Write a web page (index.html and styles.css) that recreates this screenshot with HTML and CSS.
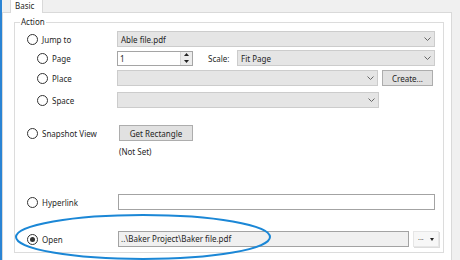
FILE: index.html
```html
<!DOCTYPE html>
<html>
<head>
    <title>Action</title>
    <link rel="stylesheet" href="styles.css">
</head>
<body>
    <div class="window">
        <div class="tabs">
            <div class="tab">Basic</div>
        </div>
        <div class="page">
            <fieldset class="group">
                <legend>Action</legend>

                <div class="row">
                    <div class="opt"><span class="radio"></span>Jump to</div>
                    <div class="combo jump-combo"><span>Able file.pdf</span><svg width="7" height="4"><path d="M0.5 0.5L3.5 3.5L6.5 0.5" fill="none" stroke="#666"/></svg></div>
                </div>

                <div class="row r-page">
                    <div class="opt sub"><span class="radio"></span>Page</div>
                    <div class="spinner">
                        <span class="spin-value">1</span>
                        <div class="spin">
                            <svg width="5" height="3"><path d="M0 3L2.5 0L5 3Z" fill="#222"/></svg>
                            <svg width="5" height="3"><path d="M0 0L2.5 3L5 0Z" fill="#222"/></svg>
                        </div>
                    </div>
                    <span class="scale-label">Scale:</span>
                    <div class="combo fill"><span>Fit Page</span><svg width="7" height="4"><path d="M0.5 0.5L3.5 3.5L6.5 0.5" fill="none" stroke="#666"/></svg></div>
                </div>

                <div class="row r-place">
                    <div class="opt sub"><span class="radio"></span>Place</div>
                    <div class="combo place-combo"><span></span><svg width="7" height="4"><path d="M0.5 0.5L3.5 3.5L6.5 0.5" fill="none" stroke="#666"/></svg></div>
                    <button class="btn create-btn">Create...</button>
                </div>

                <div class="row r-space">
                    <div class="opt sub"><span class="radio"></span>Space</div>
                    <div class="combo space-combo"><span></span><svg width="7" height="4"><path d="M0.5 0.5L3.5 3.5L6.5 0.5" fill="none" stroke="#666"/></svg></div>
                </div>

                <div class="row r-snap">
                    <div class="opt"><span class="radio"></span>Snapshot View</div>
                    <button class="btn rect-btn">Get Rectangle</button>
                </div>
                <div class="note">(Not Set)</div>

                <div class="row r-link">
                    <div class="opt"><span class="radio"></span>Hyperlink</div>
                    <div class="textbox link-box"></div>
                </div>

                <div class="row r-open">
                    <div class="opt"><span class="radio checked"></span>Open</div>
                    <div class="textbox open-box">..\Baker Project\Baker file.pdf</div>
                    <div class="browse-btn"><span class="dots">···</span><span class="caret"></span></div>
                </div>
            </fieldset>
        </div>
    </div>

    <svg class="highlight" width="460" height="260">
        <ellipse cx="143" cy="237" rx="127" ry="22" fill="none" stroke="#1b87d6" stroke-width="2"/>
    </svg>
</body>
</html>
```

FILE: styles.css
```css
body {
    margin: 0;
    background: #f0f0f0;
    font-family: "Noto Sans", "Liberation Sans", sans-serif;
    font-size: 8px;
    color: #1f1f1f;
}
.window {
    position: relative;
    width: 460px;
    height: 260px;
    box-sizing: border-box;
    border-left: 2px solid #2b84d4;
    padding-right: 8px;
    overflow: hidden;
}
.tabs {
    display: flex;
    height: 12px;
}
.tab {
    position: relative;
    margin-left: 8px;
    margin-bottom: -1px;
    width: 33px;
    height: 13px;
    box-sizing: border-box;
    padding-left: 4px;
    line-height: 11px;
    background: #fff;
    border: 1px solid #d9d9d9;
    border-top: none;
    border-bottom: none;
}
.page {
    background: #fff;
    border: 1px solid #d9d9d9;
    border-bottom: none;
    height: 248px;
    padding: 3px 7px 0 11px;
}
.group {
    margin: 0;
    border: 1px solid #dcdcdc;
    padding: 3px 8px 5px 12px;
}
.group legend {
    margin-left: -7px;
    padding: 0 1px;
    line-height: 12px;
}
.row {
    display: flex;
    align-items: center;
    height: 16px;
}
.r-page { margin-top: 3px; }
.r-place { margin-top: 4px; }
.r-space { margin-top: 6px; }
.r-snap { margin-top: 17px; }
.r-link { margin-top: 37px; }
.r-open { margin-top: 21px; }
.opt {
    flex: none;
    width: 90px;
    box-sizing: border-box;
    display: flex;
    align-items: center;
    gap: 4px;
}
.opt.sub {
    padding-left: 10px;
}
.radio {
    width: 11px;
    height: 11px;
    box-sizing: border-box;
    border: 1px solid #333;
    border-radius: 50%;
    background: #fff;
    display: flex;
    align-items: center;
    justify-content: center;
}
.radio.checked::after {
    content: "";
    width: 5px;
    height: 5px;
    border-radius: 50%;
    background: #333;
}
.combo {
    height: 16px;
    box-sizing: border-box;
    border: 1px solid #cccccc;
    background: #e5e5e5;
    display: flex;
    align-items: center;
    justify-content: space-between;
    padding: 0 3px;
}
.jump-combo { flex: 1; }
.fill { flex: 1; }
.place-combo { width: 261px; }
.space-combo { width: 262px; }
.spinner {
    width: 76px;
    height: 15px;
    box-sizing: border-box;
    border: 1px solid #a5a5a5;
    background: #fff;
    display: flex;
    align-items: center;
    justify-content: space-between;
}
.spin-value {
    padding-left: 2px;
}
.spin {
    width: 11px;
    height: 100%;
    background: #ececec;
    border-left: 1px solid #d5d5d5;
    display: flex;
    flex-direction: column;
    align-items: center;
    justify-content: space-around;
}
.scale-label {
    margin-left: 15px;
    width: 29px;
}
.btn {
    font: inherit;
    color: inherit;
    height: 16px;
    box-sizing: border-box;
    background: #e1e1e1;
    border: 1px solid #adadad;
    padding: 0;
}
.create-btn {
    margin-left: 4px;
    width: 51px;
}
.rect-btn {
    margin-left: 2px;
    width: 74px;
}
.note {
    margin-top: 5px;
    line-height: 11px;
    padding-left: 92px;
}
.textbox {
    height: 16px;
    box-sizing: border-box;
    border: 1px solid #a3a3a3;
    margin-left: 1px;
    padding-left: 2px;
    line-height: 14px;
    white-space: nowrap;
}
.link-box {
    flex: 1;
    background: #fff;
}
.open-box {
    flex: none;
    width: 291px;
    background: #f0f0f0;
}
.browse-btn {
    flex: none;
    width: 26px;
    height: 16px;
    box-sizing: border-box;
    margin-left: 4px;
    margin-right: -5px;
    background: #f7f7f7;
    border: 1px solid #e6e6e6;
    box-shadow: 1px 1px 0 #dcdcdc;
    display: flex;
    align-items: center;
    justify-content: space-between;
    padding: 0 4px 0 4px;
}
.dots {
    color: #555;
    font-size: 7px;
}
.caret {
    width: 0;
    height: 0;
    border-left: 2.5px solid transparent;
    border-right: 2.5px solid transparent;
    border-top: 3px solid #222;
}
.highlight {
    position: absolute;
    top: 0;
    left: 0;
    pointer-events: none;
}
```
